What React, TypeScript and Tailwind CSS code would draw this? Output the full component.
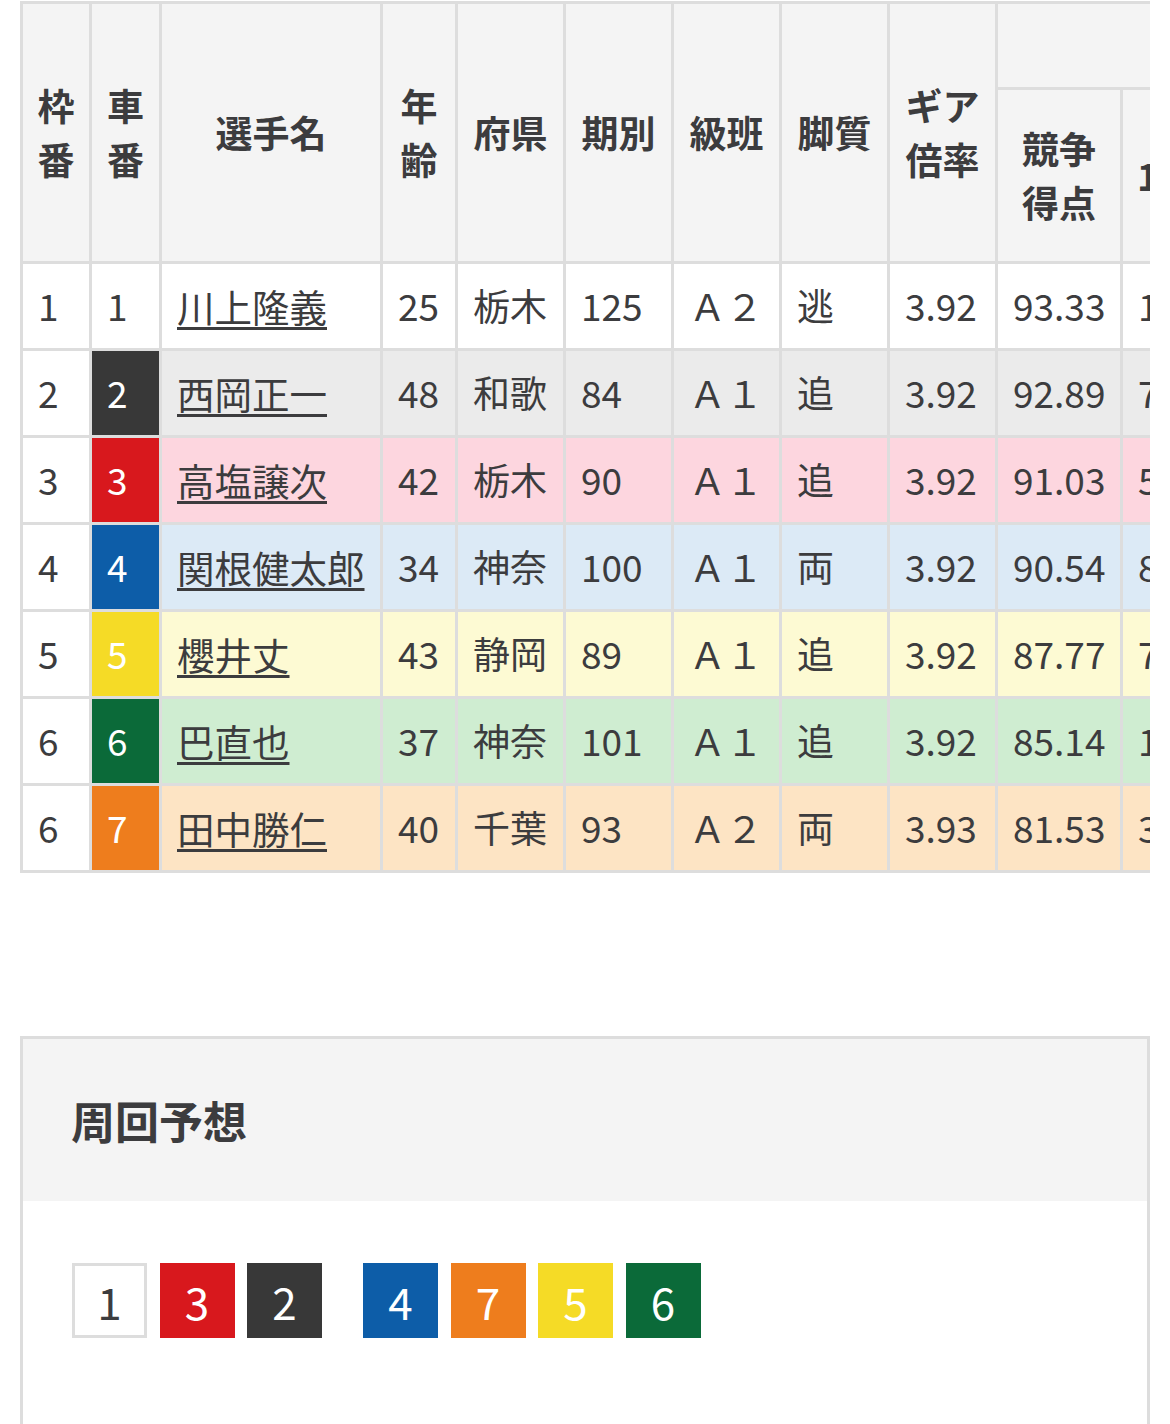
import React from 'react';

interface Racer {
  frame: number;
  car: number;
  name: string;
  age: number;
  pref: string;
  term: number;
  rank: string;
  style: string;
  gear: string;
  score: string;
  first: string;
}

const racers: Racer[] = [
  { frame: 1, car: 1, name: '川上隆義', age: 25, pref: '栃木', term: 125, rank: 'Ａ２', style: '逃', gear: '3.92', score: '93.33', first: '1' },
  { frame: 2, car: 2, name: '西岡正一', age: 48, pref: '和歌', term: 84, rank: 'Ａ１', style: '追', gear: '3.92', score: '92.89', first: '7' },
  { frame: 3, car: 3, name: '高塩譲次', age: 42, pref: '栃木', term: 90, rank: 'Ａ１', style: '追', gear: '3.92', score: '91.03', first: '5' },
  { frame: 4, car: 4, name: '関根健太郎', age: 34, pref: '神奈', term: 100, rank: 'Ａ１', style: '両', gear: '3.92', score: '90.54', first: '8' },
  { frame: 5, car: 5, name: '櫻井丈', age: 43, pref: '静岡', term: 89, rank: 'Ａ１', style: '追', gear: '3.92', score: '87.77', first: '7' },
  { frame: 6, car: 6, name: '巴直也', age: 37, pref: '神奈', term: 101, rank: 'Ａ１', style: '追', gear: '3.92', score: '85.14', first: '1' },
  { frame: 6, car: 7, name: '田中勝仁', age: 40, pref: '千葉', term: 93, rank: 'Ａ２', style: '両', gear: '3.93', score: '81.53', first: '3' },
];

// row tint per car number
const rowBg: Record<number, string> = {
  1: 'bg-white',
  2: 'bg-[#ebebeb]',
  3: 'bg-[#fdd6df]',
  4: 'bg-[#dceaf6]',
  5: 'bg-[#fdfad3]',
  6: 'bg-[#cfedd1]',
  7: 'bg-[#fde4c4]',
};

// solid car colour + number colour
const carColor: Record<number, string> = {
  1: 'bg-white text-[#3c3c3e]',
  2: 'bg-[#383838] text-white',
  3: 'bg-[#d8181d] text-white',
  4: 'bg-[#0d5da8] text-white',
  5: 'bg-[#f5db26] text-white',
  6: 'bg-[#0b6a39] text-white',
  7: 'bg-[#ee7d1d] text-white',
};

const lapOrder = [[1, 3, 2], [4, 7, 5, 6]];

const th = 'border-r-[3px] border-b-[3px] border-[#dddddd] bg-[#f4f4f4] font-bold text-center align-middle px-[14px] leading-[1.45]';
const td = 'h-[87px] border-r-[3px] border-b-[3px] border-[#dddddd] px-[15px] align-middle whitespace-nowrap';

const App = () => {
  return (
    <div className="min-h-[1424px] bg-white text-[#3c3c3e] font-['Noto_Sans_CJK_JP','Noto_Sans',sans-serif] pl-[20px] pr-[20px]">
      {/* Racer table */}
      <div className="mt-[1px] w-[1130px] overflow-hidden">
        <table className="table-fixed border-separate border-spacing-0 border-l-[3px] border-t-[3px] border-[#dddddd] w-[1573px] text-[37px]">
          <colgroup>
            <col className="w-[69px]" />
            <col className="w-[70px]" />
            <col className="w-[221px]" />
            <col className="w-[75px]" />
            <col className="w-[108px]" />
            <col className="w-[108px]" />
            <col className="w-[108px]" />
            <col className="w-[108px]" />
            <col className="w-[108px]" />
            <col className="w-[125px]" />
            <col className="w-[90px]" />
            <col className="w-[90px]" />
            <col className="w-[90px]" />
            <col className="w-[200px]" />
          </colgroup>
          <thead>
            <tr>
              <th rowSpan={2} className={th + ' px-0'}>枠<br />番</th>
              <th rowSpan={2} className={th + ' px-0'}>車<br />番</th>
              <th rowSpan={2} className={th}>選手名</th>
              <th rowSpan={2} className={th + ' px-0'}>年<br />齢</th>
              <th rowSpan={2} className={th + ' px-0'}>府県</th>
              <th rowSpan={2} className={th + ' px-0'}>期別</th>
              <th rowSpan={2} className={th + ' px-0'}>級班</th>
              <th rowSpan={2} className={th + ' px-0'}>脚質</th>
              <th rowSpan={2} className={th + ' px-0'}>ギア<br />倍率</th>
              <th colSpan={5} className={th + ' h-[86px]'}></th>
            </tr>
            <tr>
              <th className={th + ' h-[174px] px-0'}>競争<br />得点</th>
              <th className={th + ' px-0'}>1着</th>
              <th className={th + ' px-0'}>2着</th>
              <th className={th + ' px-0'}>3着</th>
              <th className={th}>着外</th>
            </tr>
          </thead>
          <tbody>
            {racers.map((r) => (
              <tr key={r.car} className={rowBg[r.car]}>
                <td className={td + ' bg-white'}>{r.frame}</td>
                <td className={td + ' ' + carColor[r.car]}>{r.car}</td>
                <td className={td}>
                  <a className="underline decoration-[3px] underline-offset-[5px] text-[37.5px]">{r.name}</a>
                </td>
                <td className={td}>{r.age}</td>
                <td className={td}>{r.pref}</td>
                <td className={td}>{r.term}</td>
                <td className={td}>{r.rank}</td>
                <td className={td}>{r.style}</td>
                <td className={td}>{r.gear}</td>
                <td className={td}>{r.score}</td>
                <td className={td}>{r.first}</td>
                <td className={td}>0</td>
                <td className={td}>0</td>
                <td className={td}>2</td>
              </tr>
            ))}
          </tbody>
        </table>
      </div>

      {/* Lap prediction */}
      <div className="mt-[163px] w-[1130px] border-x-[3px] border-t-[3px] border-[#dddddd] min-h-[400px]">
        <div className="h-[162px] bg-[#f4f4f4] flex items-center pl-[48px]">
          <h2 className="text-[44px] font-bold">周回予想</h2>
        </div>
        <div className="pt-[62px] pl-[49px] flex gap-[41px]">
          {lapOrder.map((group, gi) => (
            <div key={gi} className="flex gap-[12.5px]">
              {group.map((n) => (
                <div
                  key={n}
                  className={'w-[75px] h-[75px] flex items-center justify-center text-[44px] leading-none ' + carColor[n] + (n === 1 ? ' border-[3px] border-[#dddddd]' : '')}
                >
                  {n}
                </div>
              ))}
            </div>
          ))}
        </div>
      </div>
    </div>
  );
};

export default App;
